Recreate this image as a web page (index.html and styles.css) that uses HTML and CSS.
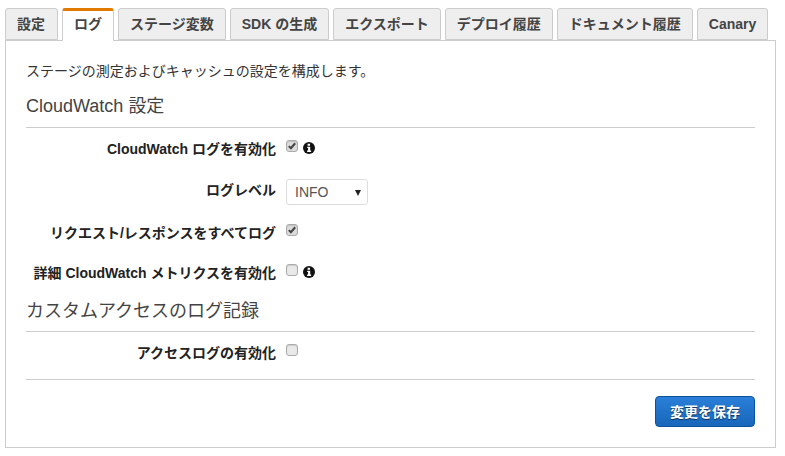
FILE: index.html
```html
<!DOCTYPE html>
<html lang="ja">
<head>
    <meta charset="UTF-8">
    <title>ステージ</title>
    <link rel="stylesheet" href="styles.css">
</head>
<body>
<div class="box">
    <ul class="tabs">
        <li>設定</li>
        <li class="current">ログ</li>
        <li>ステージ変数</li>
        <li>SDK の生成</li>
        <li>エクスポート</li>
        <li>デプロイ履歴</li>
        <li>ドキュメント履歴</li>
        <li>Canary</li>
    </ul>
    <div class="panel">
        <p class="desc">ステージの測定およびキャッシュの設定を構成します。</p>
        <h3 class="title">CloudWatch 設定</h3>
        <div class="row row-first">
            <label class="name">CloudWatch ログを有効化</label>
            <span class="check checked"><svg viewBox="0 0 11 11"><path d="M2 5.600l2.300 2.400 4.700-5.500" fill="none" stroke="#444" stroke-width="2.200"/></svg></span>
            <svg class="info" viewBox="0 0 12 12"><circle cx="6" cy="6" r="6" fill="#111"/><path d="M4.600 1.800h2.400v1.900H4.600zM4.200 4.700h3v3.900h.9v1.500H4.100V8.600h1V6.100h-.9z" fill="#fff"/></svg>
        </div>
        <div class="row row-select">
            <label class="name">ログレベル</label>
            <div class="select">INFO<i class="caret"></i></div>
        </div>
        <div class="row">
            <label class="name">リクエスト/レスポンスをすべてログ</label>
            <span class="check checked"><svg viewBox="0 0 11 11"><path d="M2 5.600l2.300 2.400 4.700-5.500" fill="none" stroke="#444" stroke-width="2.200"/></svg></span>
        </div>
        <div class="row">
            <label class="name">詳細 CloudWatch メトリクスを有効化</label>
            <span class="check"></span>
            <svg class="info" viewBox="0 0 12 12"><circle cx="6" cy="6" r="6" fill="#111"/><path d="M4.600 1.800h2.400v1.900H4.600zM4.200 4.700h3v3.900h.9v1.500H4.100V8.600h1V6.100h-.9z" fill="#fff"/></svg>
        </div>
        <h3 class="title title-access">カスタムアクセスのログ記録</h3>
        <div class="row">
            <label class="name">アクセスログの有効化</label>
            <span class="check"></span>
        </div>
        <div class="footer">
            <button class="save">変更を保存</button>
        </div>
    </div>
</div>
</body>
</html>
```

FILE: styles.css
```css
* {
    margin: 0;
    padding: 0;
    box-sizing: border-box;
}

ul {
    list-style: none;
}

body {
    background-color: #fff;
    color: #333;
    font: 14px/20px "Liberation Sans", "Noto Sans CJK JP", sans-serif;
}

.box {
    width: 771px;
    margin: 8px 0 0 5px;
}

.tabs {
    display: flex;
    gap: 4px;
    height: 32px;
    position: relative;
    z-index: 1;
}

.tabs li {
    height: 32px;
    padding: 5px 11px 0;
    background-color: #eee;
    border: 1px solid #ccc;
    border-radius: 3px 3px 0 0;
    color: #444;
    font-weight: bold;
    white-space: nowrap;
}

.tabs li:first-child {
    padding-right: 12px;
}

.tabs li.current {
    height: 33px;
    background-color: #fff;
    border-top: 3px solid #e07b00;
    border-bottom: 0;
    padding-top: 3px;
}

.panel {
    height: 408px;
    padding: 20px 20px 0;
    border: 1px solid #ccc;
}

.title {
    margin-top: 13px;
    padding-bottom: 9px;
    border-bottom: 1px solid #ccc;
    font-size: 18px;
    font-weight: normal;
    line-height: 24px;
    color: #444;
}

.title-access {
    margin-top: 6px;
    padding-bottom: 7px;
    line-height: 26px;
}

.row {
    display: flex;
    align-items: flex-start;
    height: 40px;
    padding-top: 11px;
}

.row-first {
    height: 41px;
}

.row-select {
    height: 43px;
}

.name {
    width: 250px;
    margin-right: 10px;
    font-weight: bold;
    text-align: right;
    white-space: nowrap;
    color: #222;
}

.check {
    width: 12px;
    height: 12px;
    margin-top: 1px;
    background-color: #e9e9e9;
    border: 1px solid #aaa;
    border-radius: 3px;
    box-shadow: inset 0 1px 1px rgba(0, 0, 0, .12);
}

.check.checked {
    background-color: #dcdcdc;
}

.check svg {
    display: block;
    width: 10px;
    height: 10px;
}

.info {
    width: 12px;
    height: 12px;
    margin: 3px 0 0 5px;
}

.select {
    position: relative;
    width: 82px;
    height: 26px;
    margin-top: -1px;
    padding: 2px 0 0 8px;
    background-color: #fff;
    border: 1px solid #ddd;
    border-radius: 3px;
    color: #555;
}

.caret {
    position: absolute;
    right: 6px;
    top: 10px;
    border-left: 3px solid transparent;
    border-right: 3px solid transparent;
    border-top: 6px solid #222;
}

.footer {
    margin-top: 7px;
    padding-top: 16px;
    border-top: 1px solid #ccc;
    display: flex;
    justify-content: flex-end;
}

.save {
    width: 100px;
    height: 31px;
    padding-bottom: 2px;
    background: linear-gradient(#2b7fd8, #1766bb);
    border: 1px solid #0d5299;
    border-radius: 4px;
    color: #fff;
    font: bold 14px "Liberation Sans", "Noto Sans CJK JP", sans-serif;
    text-shadow: 0 1px 1px rgba(0, 0, 0, .6);
}
```
